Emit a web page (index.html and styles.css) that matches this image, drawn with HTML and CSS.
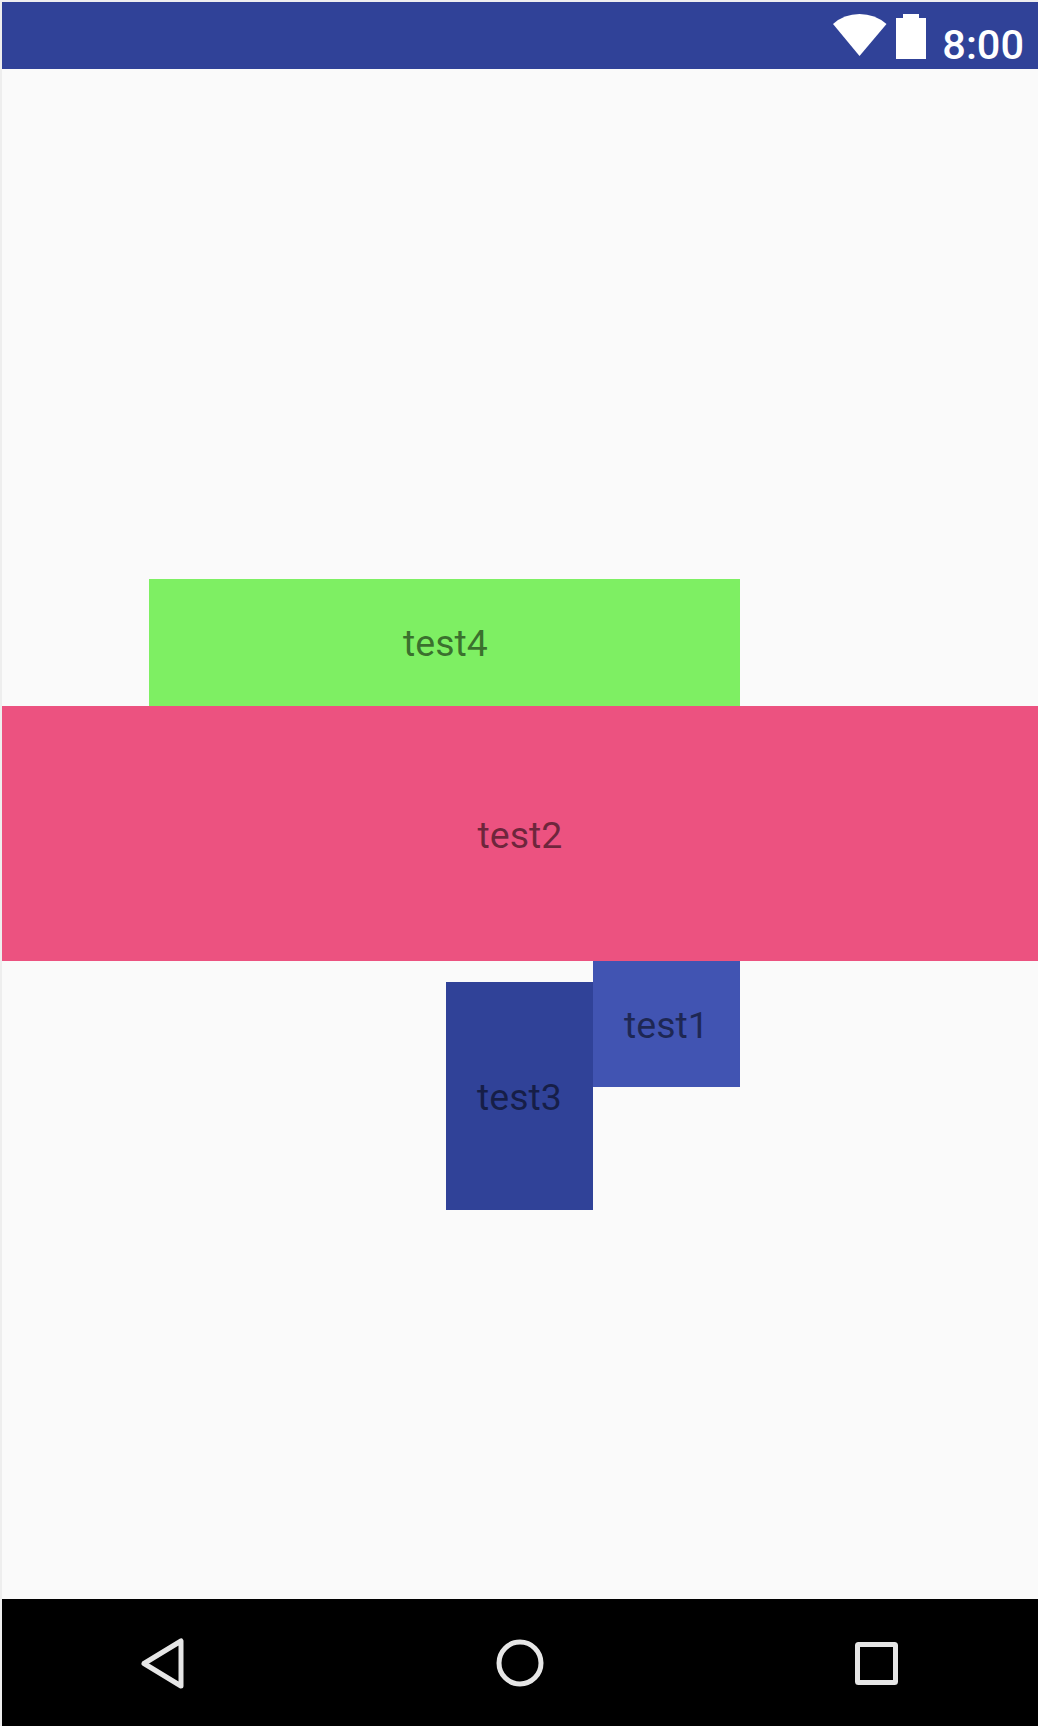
FILE: index.html
```html
<!DOCTYPE html>
<html lang="en">
<head>
<meta charset="utf-8">
<title>Layout preview</title>
<link rel="stylesheet" href="styles.css">
</head>
<body>
<div class="device">
  <header class="status-bar">
    <svg class="wifi" width="54" height="43" viewBox="0 0 54 43"><path d="M0 10Q11 0 26.500 0T53.500 10L26.500 42Z"/></svg>
    <svg class="battery" width="30" height="45" viewBox="0 0 30 45"><path d="M0 4H7V0H23V4H30V45H0Z"/></svg>
    <span class="clock">8:00</span>
  </header>
  <main class="content">
    <div class="box box-green">test4</div>
    <div class="box box-pink">test2</div>
    <div class="lower">
      <div class="box box-dark">test3</div>
      <div class="box box-blue">test1</div>
    </div>
  </main>
  <nav class="nav-bar">
    <svg class="back" width="44" height="52" viewBox="0 0 44 52"><path d="M41 4V49L4 26.500Z"/></svg>
    <svg class="home" width="48" height="48" viewBox="0 0 48 48"><circle cx="24" cy="24" r="21"/></svg>
    <svg class="recent" width="44" height="44" viewBox="0 0 44 44"><rect x="2.500" y="3.500" width="38" height="38" rx="1"/></svg>
  </nav>
</div>
</body>
</html>
```
FILE: styles.css
```css
* {
  box-sizing: border-box;
}

body {
  margin: 0;
  font-family: Roboto, sans-serif;
}

.device {
  display: flex;
  flex-direction: column;
  height: 1726px;
  border-top: 2px solid #eeeef0;
  border-left: 2px solid #eeeeee;
  background: #fafafa;
  overflow: hidden;
}

.status-bar {
  display: flex;
  align-items: flex-start;
  justify-content: flex-end;
  flex: none;
  height: 67px;
  padding: 12px 14px 0 0;
  background: #304298;
  color: #fff;
}

.status-bar svg {
  display: block;
  fill: #fff;
}

.battery {
  margin-left: 9px;
}

.clock {
  margin-left: 16px;
  padding-top: 6px;
  font-size: 41.500px;
  font-weight: 500;
  line-height: 50px;
}

.content {
  display: flex;
  flex: 1;
  flex-direction: column;
  padding-top: 510px;
}

.box {
  display: flex;
  align-items: center;
  justify-content: center;
  padding-top: 2px;
  color: rgba(0, 0, 0, 0.54);
  font-size: 37.500px;
  line-height: 44px;
}

.box-green {
  width: 591px;
  height: 127px;
  margin-left: 147px;
  padding: 0 0 0 2px;
  background: #7eef63;
}

.box-pink {
  height: 255px;
  background: #ec5280;
}

.lower {
  display: flex;
  align-items: flex-start;
  margin-left: 444px;
}

.box-dark {
  width: 147px;
  height: 228px;
  margin-top: 21px;
  background: #304298;
}

.box-blue {
  width: 147px;
  height: 126px;
  background: #4154b2;
}

.nav-bar {
  display: flex;
  flex: none;
  align-items: center;
  justify-content: space-between;
  height: 127px;
  padding: 0 139px 0 138px;
  background: #000;
}

.nav-bar svg {
  fill: none;
  stroke: #e6e6e6;
  stroke-width: 5;
  stroke-linejoin: round;
}
```
